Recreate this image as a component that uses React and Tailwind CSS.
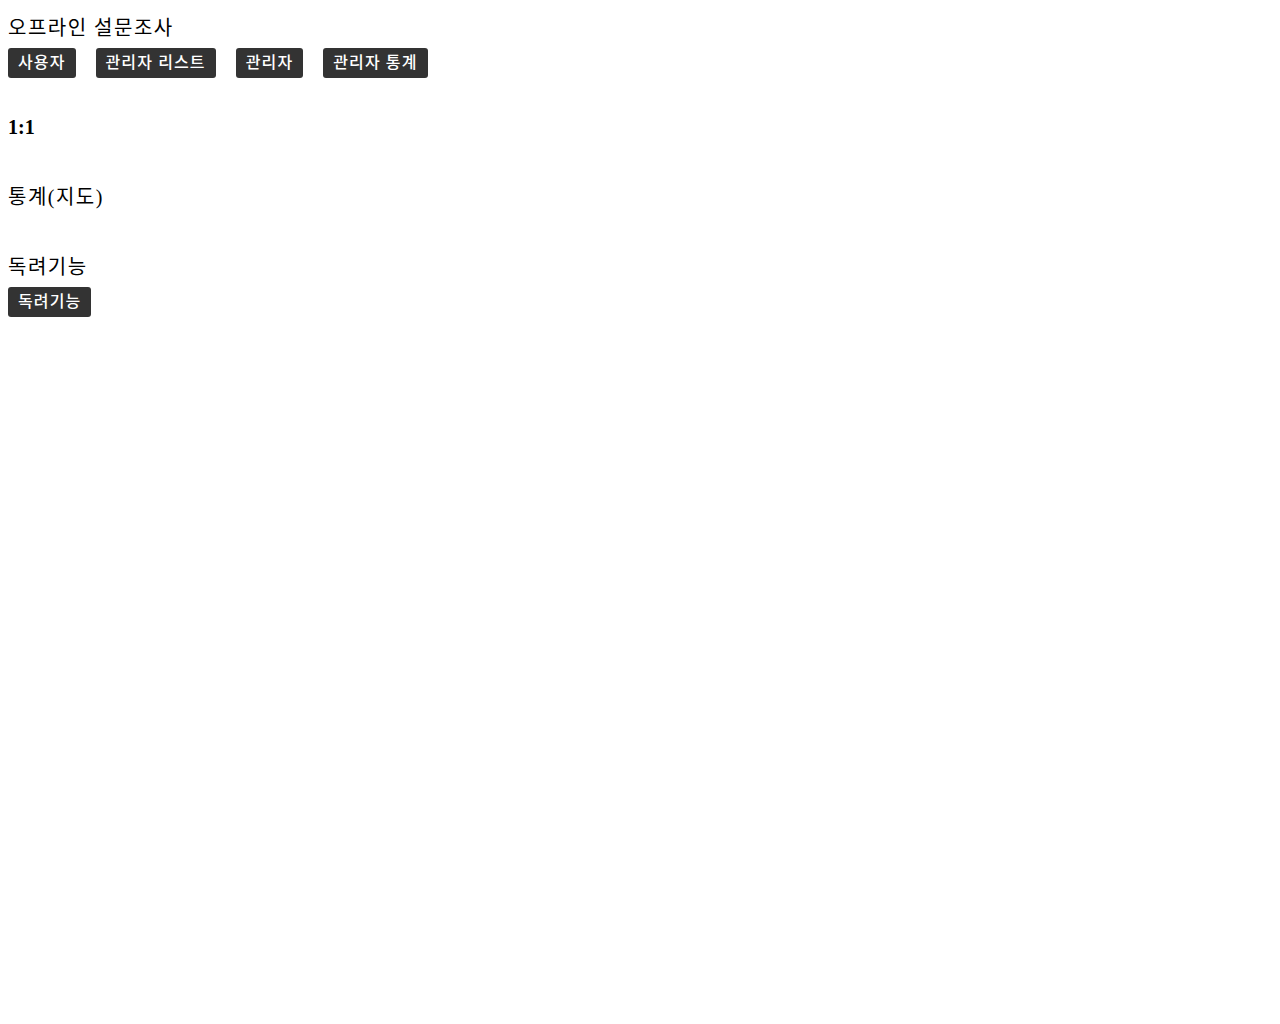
export default function App() {
  const font = { fontFamily: '"Liberation Serif", "Noto Sans CJK KR", serif' };
  const btn = "h-[30px] px-[10px] bg-[#333333] text-white text-[16px] font-medium tracking-[0.07em] rounded-[3px] leading-[30px]";
  return (
    <div className="p-2 text-black" style={font}>
      <div className="text-[20px] leading-[23px] mt-[9px] tracking-[0.075em]">오프라인 설문조사</div>
      <div className="flex gap-5 mt-[8px]">
        <button className={btn}>사용자</button>
        <button className={btn}>관리자 리스트</button>
        <button className={btn}>관리자</button>
        <button className={btn}>관리자 통계</button>
      </div>
      <div className="text-[20px] font-bold leading-[23px] mt-[38px]">1:1</div>
      <div className="text-[20px] leading-[23px] mt-[47px] tracking-[0.075em]">통계(지도)</div>
      <div className="text-[20px] leading-[23px] mt-[47px] tracking-[0.075em]">독려기능</div>
      <div className="flex mt-[8px]">
        <button className={btn}>독려기능</button>
      </div>
    </div>
  );
}
